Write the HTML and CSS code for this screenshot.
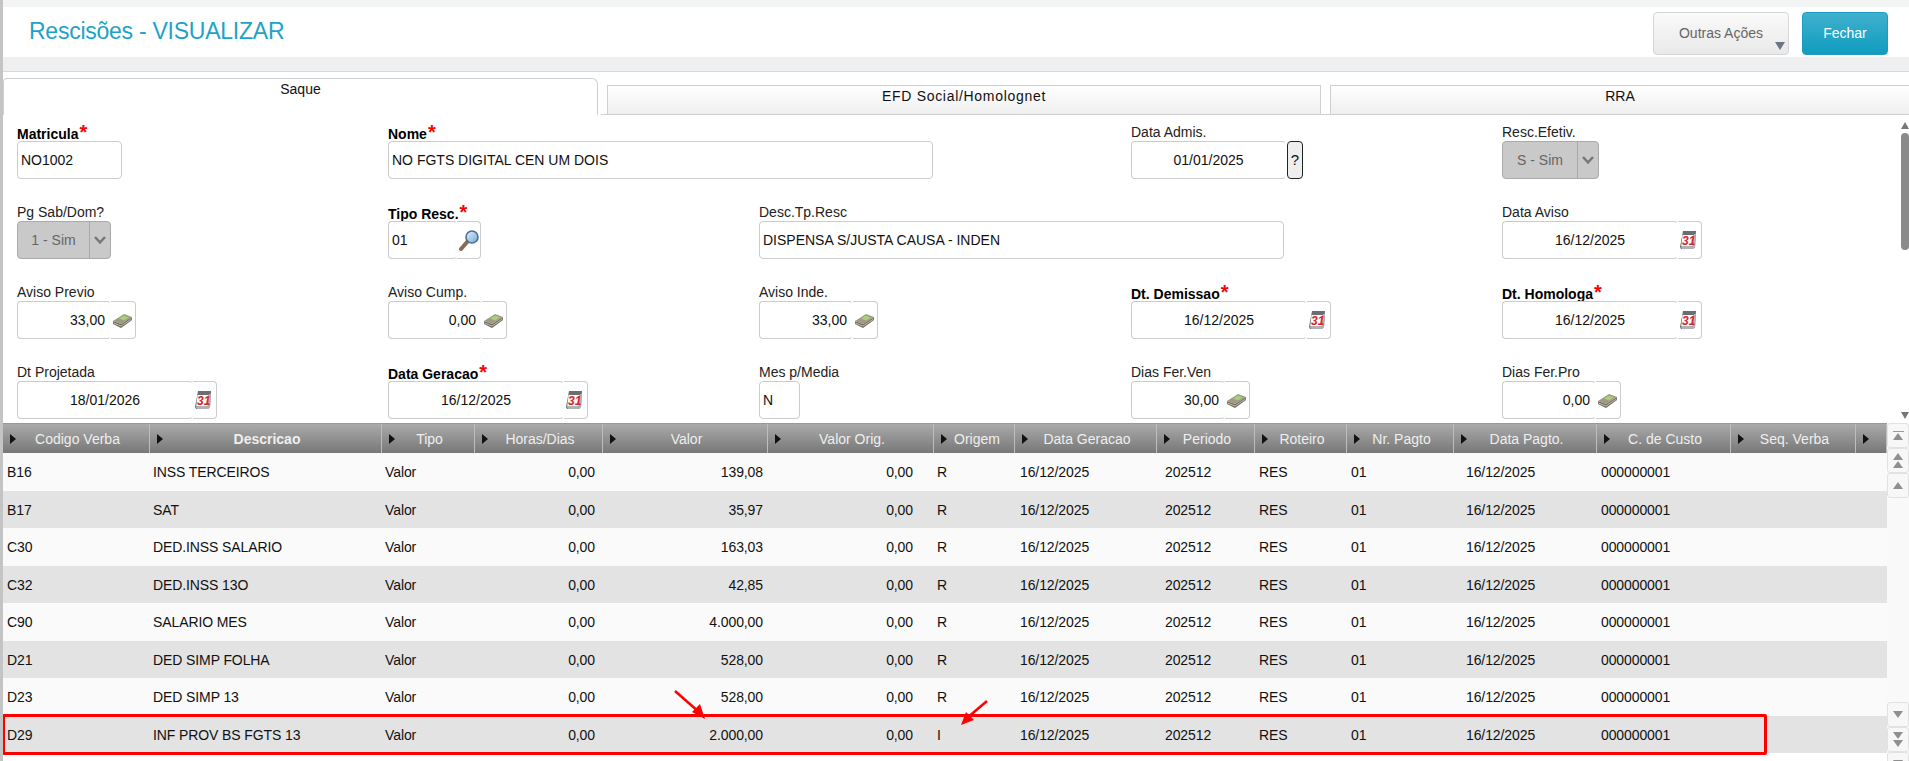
FILE: index.html
```html
<!DOCTYPE html>
<html>

<head>
  <meta charset="UTF-8">
  <title>Rescisões</title>
  <link rel="stylesheet" href="styles.css">
</head>

<body>
  <svg class="defs" width="0" height="0">
    <defs>
      <linearGradient id="lens" x1="0" y1="0" x2="1" y2="1">
        <stop offset="0" stop-color="#e4f2fb" />
        <stop offset="1" stop-color="#6fa9d8" />
      </linearGradient>
      <symbol id="ico-search" viewBox="0 0 22 22">
        <path d="M3 20 L10 12" stroke="#8a6a55" stroke-width="4" stroke-linecap="round" />
        <circle cx="14" cy="8" r="6" fill="url(#lens)" stroke="#4c6f94" stroke-width="1.6" />
      </symbol>
      <symbol id="ico-cal" viewBox="0 0 16 18">
        <path d="M3 0 H16 L15 16 L13 18 H1 L0 16 Z" fill="#6a6e72" />
        <path d="M14 3 H16 L15 16 L13 18 H2 L1 16 H13 Z" fill="#b0b2b4" />
        <path d="M2.500 4 H13.500 L12.800 15.500 H1.200 Z" fill="#fafafa" />
        <text x="2" y="14" class="cal-num">31</text>
      </symbol>
      <symbol id="ico-money" viewBox="0 0 19 15">
        <path d="M0 8 L8 11 L19 4 L19 7 L8 15 L0 11 Z" fill="#6f6a5c" />
        <path d="M0 8 L11 1 L19 4 L8 11 Z" fill="#a09a85" />
        <path d="M6 5.500 L11 2.500 L16 4.500 L11 7.500 Z" fill="#a8cf7c" />
        <path d="M0.500 10 L8 13 L18.500 6" fill="none" stroke="#d8d6cc" stroke-width="0.800" />
      </symbol>
    </defs>
  </svg>

  <div class="top-band"></div>
  <header class="page-head">
    <h1 class="page-title">Rescisões - VISUALIZAR</h1>
    <div class="head-actions">
      <button class="btn btn-more">Outras Ações</button>
      <button class="btn btn-close">Fechar</button>
    </div>
  </header>
  <div class="sub-band"></div>

  <nav class="tabs">
    <div class="tab tab-active tab-saque">Saque</div>
    <div class="tab tab-efd">EFD Social/Homolognet</div>
    <div class="tab tab-rra">RRA</div>
  </nav>

  <section class="form-area">
    <div class="form-grid">
      <div class="field">
        <label class="lbl lbl-req">Matricula<span class="req">*</span></label>
        <div class="group"><div class="input w-105">NO1002</div></div>
      </div>
      <div class="field field-wide">
        <label class="lbl lbl-req">Nome<span class="req">*</span></label>
        <div class="group"><div class="input w-545">NO FGTS DIGITAL CEN UM DOIS</div></div>
      </div>
      <div class="field">
        <label class="lbl">Data Admis.</label>
        <div class="group">
          <div class="input input-date w-155">01/01/2025</div>
          <div class="help">?</div>
        </div>
      </div>
      <div class="field">
        <label class="lbl">Resc.Efetiv.</label>
        <div class="group">
          <div class="select w-97">
            <span class="select-val">S - Sim</span>
            <span class="select-btn"><svg width="14" height="10" viewBox="0 0 14 10"><path d="M2 2 L7 7.500 L12 2" fill="none" stroke="#777" stroke-width="2.500" /></svg></span>
          </div>
        </div>
      </div>

      <div class="field">
        <label class="lbl">Pg Sab/Dom?</label>
        <div class="group">
          <div class="select w-94">
            <span class="select-val">1 - Sim</span>
            <span class="select-btn"><svg width="14" height="10" viewBox="0 0 14 10"><path d="M2 2 L7 7.500 L12 2" fill="none" stroke="#777" stroke-width="2.500" /></svg></span>
          </div>
        </div>
      </div>
      <div class="field">
        <label class="lbl lbl-req">Tipo Resc.<span class="req">*</span></label>
        <div class="group">
          <div class="input w-69">01</div>
          <div class="addon addon-search"><svg width="22" height="22"><use href="#ico-search" /></svg></div>
        </div>
      </div>
      <div class="field field-wide">
        <label class="lbl">Desc.Tp.Resc</label>
        <div class="group"><div class="input w-525">DISPENSA S/JUSTA CAUSA - INDEN</div></div>
      </div>
      <div class="field">
        <label class="lbl">Data Aviso</label>
        <div class="group">
          <div class="input input-date w-176">16/12/2025</div>
          <div class="addon"><svg width="16" height="18"><use href="#ico-cal" /></svg></div>
        </div>
      </div>

      <div class="field">
        <label class="lbl">Aviso Previo</label>
        <div class="group">
          <div class="input input-num w-94">33,00</div>
          <div class="addon addon-money"><svg width="19" height="15"><use href="#ico-money" /></svg></div>
        </div>
      </div>
      <div class="field">
        <label class="lbl">Aviso Cump.</label>
        <div class="group">
          <div class="input input-num w-94">0,00</div>
          <div class="addon addon-money"><svg width="19" height="15"><use href="#ico-money" /></svg></div>
        </div>
      </div>
      <div class="field">
        <label class="lbl">Aviso Inde.</label>
        <div class="group">
          <div class="input input-num w-94">33,00</div>
          <div class="addon addon-money"><svg width="19" height="15"><use href="#ico-money" /></svg></div>
        </div>
      </div>
      <div class="field">
        <label class="lbl lbl-req">Dt. Demissao<span class="req">*</span></label>
        <div class="group">
          <div class="input input-date w-176">16/12/2025</div>
          <div class="addon"><svg width="16" height="18"><use href="#ico-cal" /></svg></div>
        </div>
      </div>
      <div class="field">
        <label class="lbl lbl-req">Dt. Homologa<span class="req">*</span></label>
        <div class="group">
          <div class="input input-date w-176">16/12/2025</div>
          <div class="addon"><svg width="16" height="18"><use href="#ico-cal" /></svg></div>
        </div>
      </div>

      <div class="field">
        <label class="lbl">Dt Projetada</label>
        <div class="group">
          <div class="input input-date w-176">18/01/2026</div>
          <div class="addon"><svg width="16" height="18"><use href="#ico-cal" /></svg></div>
        </div>
      </div>
      <div class="field">
        <label class="lbl lbl-req">Data Geracao<span class="req">*</span></label>
        <div class="group">
          <div class="input input-date w-176">16/12/2025</div>
          <div class="addon"><svg width="16" height="18"><use href="#ico-cal" /></svg></div>
        </div>
      </div>
      <div class="field">
        <label class="lbl">Mes p/Media</label>
        <div class="group"><div class="input w-41">N</div></div>
      </div>
      <div class="field">
        <label class="lbl">Dias Fer.Ven</label>
        <div class="group">
          <div class="input input-num w-94">30,00</div>
          <div class="addon addon-money"><svg width="19" height="15"><use href="#ico-money" /></svg></div>
        </div>
      </div>
      <div class="field">
        <label class="lbl">Dias Fer.Pro</label>
        <div class="group">
          <div class="input input-num w-94">0,00</div>
          <div class="addon addon-money"><svg width="19" height="15"><use href="#ico-money" /></svg></div>
        </div>
      </div>
    </div>

    <div class="form-scroll">
      <span class="tri tri-up"></span>
      <span class="thumb"></span>
      <span class="tri tri-down"></span>
    </div>
  </section>

  <section class="grid-wrap">
    <div class="grid-main">
      <div class="row row-head">
        <div class="hd">Codigo Verba</div>
        <div class="hd hd-sel">Descricao</div>
        <div class="hd">Tipo</div>
        <div class="hd">Horas/Dias</div>
        <div class="hd">Valor</div>
        <div class="hd">Valor Orig.</div>
        <div class="hd">Origem</div>
        <div class="hd">Data Geracao</div>
        <div class="hd">Periodo</div>
        <div class="hd">Roteiro</div>
        <div class="hd">Nr. Pagto</div>
        <div class="hd">Data Pagto.</div>
        <div class="hd">C. de Custo</div>
        <div class="hd">Seq. Verba</div>
        <div class="hd"></div>
      </div>

      <div class="row"><div>B16</div><div>INSS TERCEIROS</div><div>Valor</div><div>0,00</div><div>139,08</div><div>0,00</div><div>R</div><div>16/12/2025</div><div>202512</div><div>RES</div><div>01</div><div>16/12/2025</div><div>000000001</div><div></div><div></div></div>
      <div class="row"><div>B17</div><div>SAT</div><div>Valor</div><div>0,00</div><div>35,97</div><div>0,00</div><div>R</div><div>16/12/2025</div><div>202512</div><div>RES</div><div>01</div><div>16/12/2025</div><div>000000001</div><div></div><div></div></div>
      <div class="row"><div>C30</div><div>DED.INSS SALARIO</div><div>Valor</div><div>0,00</div><div>163,03</div><div>0,00</div><div>R</div><div>16/12/2025</div><div>202512</div><div>RES</div><div>01</div><div>16/12/2025</div><div>000000001</div><div></div><div></div></div>
      <div class="row"><div>C32</div><div>DED.INSS 13O</div><div>Valor</div><div>0,00</div><div>42,85</div><div>0,00</div><div>R</div><div>16/12/2025</div><div>202512</div><div>RES</div><div>01</div><div>16/12/2025</div><div>000000001</div><div></div><div></div></div>
      <div class="row"><div>C90</div><div>SALARIO MES</div><div>Valor</div><div>0,00</div><div>4.000,00</div><div>0,00</div><div>R</div><div>16/12/2025</div><div>202512</div><div>RES</div><div>01</div><div>16/12/2025</div><div>000000001</div><div></div><div></div></div>
      <div class="row"><div>D21</div><div>DED SIMP FOLHA</div><div>Valor</div><div>0,00</div><div>528,00</div><div>0,00</div><div>R</div><div>16/12/2025</div><div>202512</div><div>RES</div><div>01</div><div>16/12/2025</div><div>000000001</div><div></div><div></div></div>
      <div class="row"><div>D23</div><div>DED SIMP 13</div><div>Valor</div><div>0,00</div><div>528,00</div><div>0,00</div><div>R</div><div>16/12/2025</div><div>202512</div><div>RES</div><div>01</div><div>16/12/2025</div><div>000000001</div><div></div><div></div></div>
      <div class="row"><div>D29</div><div>INF PROV BS FGTS 13</div><div>Valor</div><div>0,00</div><div>2.000,00</div><div>0,00</div><div>I</div><div>16/12/2025</div><div>202512</div><div>RES</div><div>01</div><div>16/12/2025</div><div>000000001</div><div></div><div></div></div>
    </div>

    <div class="grid-side">
      <div class="side-btn"><span class="bar"></span><span class="tri tri-up"></span></div>
      <div class="side-btn"><span class="tri tri-up"></span><span class="tri tri-up"></span></div>
      <div class="side-btn"><span class="tri tri-up"></span></div>
      <div class="side-gap"></div>
      <div class="side-btn"><span class="tri tri-down"></span></div>
      <div class="side-btn"><span class="tri tri-down"></span><span class="tri tri-down"></span></div>
      <div class="side-btn"><span class="tri tri-down"></span><span class="bar"></span></div>
    </div>

    <!-- marcacao em vermelho por cima da grid -->
    <div class="mark-box"></div>
    <svg class="mark-arrows" width="1909" height="337" viewBox="0 424 1909 337">
      <path d="M675 692 L699 713" stroke="#f00" stroke-width="2.500" />
      <path d="M705 720 L692 713 L700 705 Z" fill="#f00" />
      <path d="M987 702 L967 719" stroke="#f00" stroke-width="2.500" />
      <path d="M961 726 L966 713 L974 721 Z" fill="#f00" />
    </svg>
  </section>
</body>

</html>
```

FILE: styles.css
```css
* {
  box-sizing: border-box;
}

html,
body {
  height: 100%;
}

body {
  margin: 0;
  height: 761px;
  overflow: hidden;
  border-left: 3px solid #c4c4c4;
  background-color: #fff;
  color: #111;
  font-family: "Liberation Sans", Arial, sans-serif;
  font-size: 14px;
}

.defs {
  display: block;
  height: 0;
}

.cal-num {
  fill: #d9262c;
  font-family: "Liberation Sans", Arial, sans-serif;
  font-size: 12px;
  font-weight: bold;
  font-style: italic;
}

.top-band {
  height: 7px;
  background-color: #f3f4f4;
}

.page-head {
  height: 50px;
  display: flex;
  justify-content: space-between;
  padding: 5px 21px 0 26px;
  background-color: #fff;
}

.page-title {
  margin: 0;
  padding-top: 4px;
  color: #1da3c7;
  font-size: 23px;
  font-weight: normal;
  letter-spacing: -0.25px;
  line-height: 30px;
}

.head-actions {
  display: flex;
  gap: 13px;
}

.btn {
  height: 43px;
  border-radius: 4px;
  font-family: inherit;
  font-size: 14px;
}

.btn-more {
  position: relative;
  width: 136px;
  border: 1px solid #d6d6d6;
  background: linear-gradient(#fafafa, #e9e9e9);
  color: #666;
  padding: 0 0 2px 0;
}

.btn-more::after {
  content: "";
  position: absolute;
  right: 3px;
  bottom: 4px;
  border-left: 5px solid transparent;
  border-right: 5px solid transparent;
  border-top: 8px solid #6d7484;
}

.btn-close {
  width: 86px;
  border: 1px solid #1c9dbf;
  background: linear-gradient(#3fb0cd, #109cc0);
  color: #fff;
  padding: 0 0 2px 0;
}

.sub-band {
  height: 15px;
  background-color: #eeeff0;
  border-bottom: 1px solid #d9d9d9;
}

.tabs {
  height: 43px;
  display: flex;
  align-items: flex-end;
  gap: 9px;
  padding-top: 6px;
}

.tab {
  height: 30px;
  margin-bottom: 0;
  border: 1px solid #cfcfcf;
  background: linear-gradient(#fff, #efefef);
  color: #111;
  text-align: center;
  font-size: 14px;
  line-height: 21px;
}

.tab-active {
  height: 37px;
  border-bottom: 0;
  border-radius: 4px 6px 0 0;
  background: #fff;
  line-height: 20px;
}

.tab-saque {
  width: 595px;
}

.tab-efd {
  width: 714px;
  letter-spacing: 0.7px;
}

.tab-rra {
  flex: 1;
  border-right: 0;
}

.form-area {
  height: 309px;
  display: flex;
  justify-content: space-between;
  border-top: 1px solid #cfcfcf;
  margin-left: 598px;
  margin-top: -1px;
  background-color: #fff;
}

.form-grid {
  margin-left: -598px;
  padding: 10px 0 0 14px;
  display: grid;
  grid-template-columns: 371px 371px 372px 371px 371px;
  grid-auto-rows: 54px;
  row-gap: 26px;
}

.field {
  display: flex;
  flex-direction: column;
}

.field-wide {
  grid-column: span 2;
}

.lbl {
  height: 16px;
  color: #222;
  font-size: 14px;
  line-height: 14px;
  white-space: nowrap;
}

.lbl-req {
  color: #000;
  font-weight: bold;
  line-height: 18px;
}

.req {
  margin-left: 1px;
  color: #f00;
  font-size: 20px;
  line-height: 0;
}

.group {
  display: flex;
  height: 38px;
}

.input {
  height: 38px;
  padding: 0 3px;
  border: 1px solid #ccc;
  border-radius: 4px;
  background-color: #fff;
  color: #111;
  line-height: 36px;
  white-space: nowrap;
}

/* junto do botao so os cantos da borda aparecem */
.input:not(:last-child) {
  border-right-color: transparent;
}

.input-date {
  text-align: center;
}

.input-num {
  text-align: right;
  padding-right: 5px;
}

.w-41 { width: 41px; }
.w-69 { width: 69px; }
.w-94 { width: 94px; }
.w-97 { width: 97px; }
.w-105 { width: 105px; }
.w-155 { width: 155px; }
.w-176 { width: 176px; }
.w-525 { width: 525px; }
.w-545 { width: 545px; }

.addon {
  width: 24px;
  height: 38px;
  display: flex;
  align-items: center;
  justify-content: center;
  padding-right: 3px;
  border: 1px solid #ccc;
  border-left: 0;
  border-radius: 0 4px 4px 0;
}

.addon-search {
  padding-right: 0;
}

.addon-money {
  width: 25px;
  padding-right: 1px;
}

.help {
  width: 16px;
  height: 38px;
  margin-left: 1px;
  border: 1px solid #222;
  border-radius: 4px;
  background-color: #eee;
  text-align: center;
  line-height: 36px;
  font-size: 15px;
}

.select {
  height: 38px;
  display: flex;
  border: 1px solid #aaa;
  border-radius: 4px;
  background-color: #c9c9c9;
  color: #666;
  line-height: 36px;
}

.select-val {
  flex: 1;
  text-align: center;
}

.select-btn {
  width: 21px;
  display: flex;
  align-items: center;
  justify-content: center;
  border-left: 1px solid #aaa;
}

.form-scroll {
  width: 9px;
  display: flex;
  flex-direction: column;
  align-items: center;
  padding-top: 7px;
}

.tri {
  display: block;
  width: 0;
  height: 0;
  border-left: 5px solid transparent;
  border-right: 5px solid transparent;
}

.tri-up {
  border-bottom: 7px solid #8f8f8f;
}

.tri-down {
  border-top: 7px solid #8f8f8f;
}

.form-scroll .tri-up {
  border-left-width: 4px;
  border-right-width: 4px;
  border-bottom-color: #777;
}

.form-scroll .tri-down {
  margin-top: 162px;
  border-left-width: 4px;
  border-right-width: 4px;
  border-top-color: #777;
}

.thumb {
  width: 8px;
  height: 117px;
  margin-top: 4px;
  border-radius: 4px;
  background-color: #8b8b8b;
}

.grid-wrap {
  position: relative;
  display: flex;
  height: 337px;
}

.grid-main {
  width: 1884px;
}

.row {
  height: 37.5px;
  display: grid;
  grid-template-columns: 147px 232px 93px 128px 165px 166px 81px 142px 98px 92px 107px 143px 134px 125px 31px;
  background-color: #fafafa;
  letter-spacing: -0.1px;
  line-height: 38px;
}

.row:nth-child(odd) {
  background-color: #e3e3e3;
}

.row > div {
  padding-left: 3px;
  white-space: nowrap;
}

.row > div:nth-child(1) {
  padding-left: 4px;
}

.row > div:nth-child(4) {
  text-align: right;
  padding-right: 8px;
}

.row > div:nth-child(5) {
  text-align: right;
  padding-right: 5px;
}

.row > div:nth-child(6) {
  text-align: right;
  padding-right: 21px;
}

.row > div:nth-child(8) {
  padding-left: 5px;
}

.row > div:nth-child(9) {
  padding-left: 8px;
}

.row > div:nth-child(10),
.row > div:nth-child(11),
.row > div:nth-child(13) {
  padding-left: 4px;
}

.row > div:nth-child(12) {
  padding-left: 12px;
}

.row.row-head {
  height: 30px;
  border-top: 1px solid #999;
  background: linear-gradient(#aaa, #777);
  letter-spacing: 0;
  line-height: 28px;
}

.row.row-head > .hd {
  display: grid;
  grid-template-columns: 20px 1fr 17px;
  align-items: center;
  padding: 0;
  border-right: 1px solid #bdbdbd;
  color: #eee;
  text-align: center;
}

.row.row-head > .hd::before {
  content: "";
  justify-self: center;
  width: 0;
  height: 0;
  border-top: 5px solid transparent;
  border-bottom: 5px solid transparent;
  border-left: 6px solid #111;
}

.row.row-head > .hd-sel {
  font-weight: bold;
}

.grid-side {
  width: 22px;
  display: flex;
  flex-direction: column;
  background-color: #f9f9f9;
}

.side-btn {
  flex-shrink: 0;
  height: 25px;
  display: flex;
  flex-direction: column;
  align-items: center;
  justify-content: center;
  gap: 1px;
  border: 1px solid #e2e2e2;
  border-radius: 3px;
  background-color: #f7f7f7;
}

.side-gap {
  flex-shrink: 0;
  height: 204px;
}

.bar {
  width: 11px;
  height: 1px;
  background-color: #999;
}

.mark-box {
  position: absolute;
  left: -1px;
  top: 291px;
  width: 1765px;
  height: 41px;
  border: 3px solid #f00;
  border-radius: 2px;
}

.mark-arrows {
  position: absolute;
  left: -3px;
  top: 0;
  pointer-events: none;
}
```
